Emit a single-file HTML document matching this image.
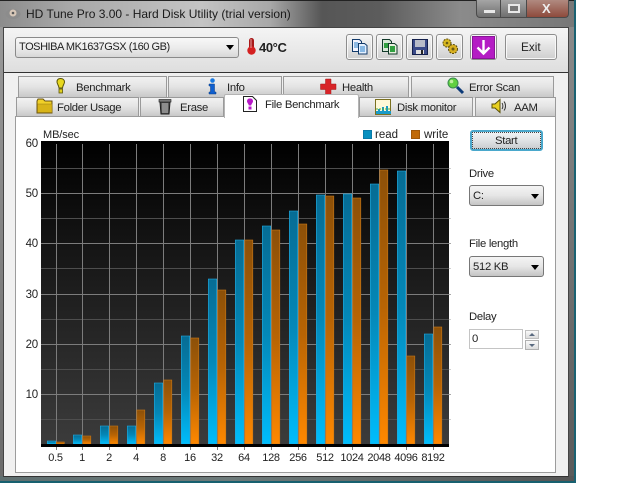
<!DOCTYPE html>
<html><head><meta charset="utf-8">
<style>
html,body{margin:0;padding:0;background:#fff}
#w{position:relative;width:640px;height:483px;overflow:hidden;background:#fff;font-family:"Liberation Sans",sans-serif;font-size:12px;color:#222}
#w div{position:absolute;box-sizing:border-box}
.t{white-space:nowrap}
.l{font-size:11.3px;letter-spacing:-.3px;line-height:15px}
.tab{background:linear-gradient(#f2f2f2,#e4e4e4 45%,#c6c6c6);border:1px solid #9a9a9a;border-bottom:none}
.tb{background:linear-gradient(#f6f6f6,#e2e2e2 50%,#cfcfcf);border:1px solid #8d8d8d;border-radius:3px;box-shadow:inset 0 0 0 1px #f8f8f8}
.sel{background:linear-gradient(#f4f4f4,#e6e6e6 50%,#c4c4c4);border:1px solid #777;border-radius:3px}
.arr{width:0;height:0;border-left:4px solid transparent;border-right:4px solid transparent;border-top:5px solid #000}
svg{position:absolute;overflow:visible}
</style></head><body>
<div id="w">
<!-- frame -->
<div style="left:0;top:0;width:576px;height:483px;background:linear-gradient(90deg,#8c8c8c 0,#a8a8a8 12%,#c4c4c4 35%,#a8a8a8 47%,#565656 56%,#5c5c5c 66%,#8b8b8b 80%,#777 100%);border-top:1px solid #222;border-right:1px solid #1d5f6e"></div>
<div style="left:0;top:27px;width:3px;height:456px;background:linear-gradient(#999,#6a6a6a)"></div>
<div style="left:569px;top:27px;width:6px;height:454px;background:linear-gradient(#8a8a8a,#5a5a5a)"></div>
<div style="left:0;top:476px;width:575px;height:5px;background:linear-gradient(90deg,#5f6f70,#6d7a7a 40%,#555 100%)"></div>
<div style="left:0;top:481px;width:576px;height:2px;background:#17606f"></div>
<div style="left:574px;top:0;width:2px;height:483px;background:#1a6272"></div>
<!-- caption -->
<svg style="left:5px;top:7px" width="16" height="13"><ellipse cx="8" cy="7" rx="7.500" ry="5" fill="#8c8c8c"/><ellipse cx="8" cy="6" rx="3.500" ry="3.500" fill="#d8c8b8"/><circle cx="8" cy="6" r="1.300" fill="#5a5a5a"/></svg>
<div class="t" style="left:26px;top:6px;font-size:12px;line-height:16px;color:#1a1a1a">HD Tune Pro 3.00 - Hard Disk Utility (trial version)</div>
<div style="left:476px;top:0;width:25px;height:18px;background:linear-gradient(#a5a5a5,#6f6f6f);border:1px solid #4a4a4a;border-top:none;border-radius:0 0 0 4px"></div>
<div style="left:484px;top:10px;width:11px;height:3px;background:#e8e8e8"></div>
<div style="left:501px;top:0;width:25px;height:18px;background:linear-gradient(#a5a5a5,#6f6f6f);border-bottom:1px solid #4a4a4a"></div>
<div style="left:508px;top:4px;width:12px;height:9px;border:2px solid #e8e8e8;background:#777"></div>
<div style="left:526px;top:0;width:43px;height:18px;background:linear-gradient(#b08a80,#8e4a3c);border:1px solid #4a4a4a;border-top:none;border-radius:0 0 4px 0"></div>
<div class="t" style="left:542px;top:0;font-size:13px;font-weight:bold;line-height:17px;color:#eee">X</div>
<!-- client -->
<div style="left:3px;top:27px;width:566px;height:450px;background:#f0f0f0;border:1px solid #444;border-bottom:1px solid #333"></div>
<div style="left:4px;top:28px;width:564px;height:44px;background:linear-gradient(#f4f4f4,#dedede)"></div>
<div style="left:4px;top:72px;width:564px;height:1px;background:#333"></div>
<!-- drive select -->
<div class="sel" style="left:15px;top:37px;width:224px;height:21px;border-color:#8a8a8a;background:linear-gradient(#f8f8f8,#ececec 50%,#d8d8d8)"></div>
<div class="t" style="left:19px;top:40px;font-size:11px;letter-spacing:-.45px;line-height:15px">TOSHIBA MK1637GSX (160 GB)</div>
<div class="arr" style="left:226px;top:45px"></div>
<svg style="left:246px;top:37px" width="11" height="19"><rect x="3" y="1" width="5" height="12" rx="2.500" fill="#a81818"/><circle cx="5.500" cy="13.500" r="4.200" fill="#d42020"/><rect x="4.500" y="2" width="1" height="9" fill="#e8a0a0"/></svg>
<div class="t" style="left:259px;top:40px;font-size:13px;font-weight:bold;line-height:15px;letter-spacing:-.4px">40°C</div>
<!-- toolbar buttons -->
<div class="tb" style="left:346px;top:34px;width:27px;height:26px"></div>
<div class="tb" style="left:376px;top:34px;width:27px;height:26px"></div>
<div class="tb" style="left:406px;top:34px;width:27px;height:26px"></div>
<div class="tb" style="left:436px;top:34px;width:27px;height:26px"></div>
<div class="tb" style="left:470px;top:34px;width:27px;height:26px"></div>
<div class="tb" style="left:505px;top:34px;width:52px;height:26px"></div>
<div class="t" style="left:521px;top:39px;font-size:11.800px;line-height:16px">Exit</div>
<svg style="left:352px;top:39px" width="16" height="16"><path d="M.5.5h7l2 2v10H.5z" fill="#f4f4ff" stroke="#123a6a"/><path d="M6.500 4.500h6l2.500 2v8.500H6.500z" fill="#e4f0ff" stroke="#123a6a"/><path d="M8 8h5M8 10h5M8 12h5M2 4h4M2 6h4M2 8h4" stroke="#2a80c8"/></svg>
<svg style="left:382px;top:39px" width="16" height="16"><path d="M.5.5h7l2 2v10H.5z" fill="#d8e8d8" stroke="#123a2a"/><path d="M6.500 4.500h6l2.500 2v8.500H6.500z" fill="#e8f0e0" stroke="#123a2a"/><rect x="8" y="7" width="5" height="6" fill="#30a040"/><rect x="2" y="4" width="4" height="5" fill="#30a040"/></svg>
<svg style="left:412px;top:39px" width="16" height="16"><rect x=".5" y=".5" width="15" height="15" fill="#3a4a88" stroke="#14204c"/><rect x="3" y="1" width="10" height="7" fill="#b8bcc8"/><rect x="4" y="11" width="8" height="4" fill="#e0e0e0"/><rect x="9" y="11" width="2" height="4" fill="#222"/></svg>
<svg style="left:441px;top:38px" width="18" height="17"><circle cx="6" cy="5" r="4" fill="#d8b820" stroke="#5a4a08" stroke-dasharray="2 1"/><circle cx="12" cy="11" r="4.500" fill="#d8b020" stroke="#5a4a08" stroke-dasharray="2 1"/><circle cx="6" cy="5" r="1.300" fill="#6a5a10"/><circle cx="12" cy="11" r="1.500" fill="#6a5a10"/></svg>
<svg style="left:471px;top:35px" width="25" height="25"><rect x="1.500" y="1.500" width="22" height="22" fill="#b41cc4" stroke="#8a1498"/><path d="M12.500 5v13M6.500 12.500l6 6 6-6" fill="none" stroke="#fff" stroke-width="2.400"/></svg>
<!-- rear tabs -->
<div class="tab" style="left:18px;top:76px;width:149px;height:22px"></div>
<div class="tab" style="left:168px;top:76px;width:114px;height:22px"></div>
<div class="tab" style="left:283px;top:76px;width:126px;height:22px"></div>
<div class="tab" style="left:411px;top:76px;width:143px;height:22px"></div>
<div class="t l" style="left:76px;top:81px">Benchmark</div>
<div class="t l" style="left:227px;top:81px">Info</div>
<div class="t l" style="left:342px;top:81px">Health</div>
<div class="t l" style="left:469px;top:81px">Error Scan</div>
<svg style="left:56px;top:78px" width="10" height="17"><path d="M4.500.5c2.500 0 4 1.500 4 3.500 0 2-1.700 3-2 6H3C2.700 7 1 6 1 4 1 2 2 .5 4.500.5z" fill="#e8d820" stroke="#5a5408"/><rect x="3" y="11" width="3.500" height="4" fill="#e0d020" stroke="#5a5408" stroke-width=".8"/></svg>
<svg style="left:208px;top:78px" width="9" height="17"><circle cx="4.500" cy="2.500" r="2.300" fill="#1878e0"/><path d="M1 6h5.500v8H8v2H1v-2h1.500V8H1z" fill="#1060d0" stroke="#083a80" stroke-width=".5"/></svg>
<svg style="left:320px;top:78px" width="17" height="17"><path d="M5.500 1h5.500v5h5v5.500h-5V16.500H5.500V11.500H.5V6h5z" fill="#d82428" stroke="#a01818" stroke-width=".5"/></svg>
<svg style="left:447px;top:77px" width="18" height="18"><circle cx="6" cy="6" r="5" fill="#60d040" stroke="#3a8a50"/><circle cx="4.500" cy="4.500" r="1.800" fill="#c0f0a0"/><path d="M10 10l6 6" stroke="#0c3a78" stroke-width="3"/></svg>
<!-- front tabs -->
<div class="tab" style="left:16px;top:97px;width:123px;height:20px"></div>
<div class="tab" style="left:140px;top:97px;width:84px;height:20px"></div>
<div class="tab" style="left:359px;top:97px;width:114px;height:20px"></div>
<div class="tab" style="left:475px;top:97px;width:81px;height:20px"></div>
<div class="t l" style="left:57px;top:101px">Folder Usage</div>
<div class="t l" style="left:180px;top:101px">Erase</div>
<div class="t l" style="left:397px;top:101px">Disk monitor</div>
<div class="t l" style="left:514px;top:101px">AAM</div>
<svg style="left:36px;top:98px" width="17" height="16"><path d="M1 3l1-2h5l2 2h7v12H1z" fill="#f0d028" stroke="#6a5410"/><rect x="1.500" y="6" width="14.500" height="8.500" fill="#d8b418" stroke="#9a7c10" stroke-width=".5"/></svg>
<svg style="left:158px;top:98px" width="14" height="16"><path d="M2 4h10l-1 12H3z" fill="#585858" stroke="#1a1a1a"/><rect x="1" y="1.500" width="12" height="2.500" fill="#7a7a7a" stroke="#1a1a1a" stroke-width=".6"/><path d="M5 5v10M7 5v10M9 5v10" stroke="#c0c0c0"/></svg>
<svg style="left:375px;top:99px" width="17" height="16"><rect x=".5" y=".5" width="15" height="15" fill="#fff8d8" stroke="#7a7020"/><path d="M1 15V12h2v-2h2v2h2V8h2v4h2V7h2v5h3v3z" fill="#1a9ac8"/><path d="M1 10h14" stroke="#50b040" stroke-dasharray="2 1"/></svg>
<svg style="left:491px;top:98px" width="17" height="16"><path d="M1 6h3l5-4.500v13L4 10H1z" fill="#e8d020" stroke="#5a5008"/><path d="M11 5c1.200 1.500 1.200 4.500 0 6M13 3.500c2 2.500 2 6.500 0 9" fill="none" stroke="#333"/></svg>
<!-- panel -->
<div style="left:15px;top:116px;width:541px;height:357px;background:#fff;border:1px solid #9c9c9c"></div>
<!-- active tab -->
<div style="left:224px;top:94px;width:135px;height:24px;background:#fff;border:1px solid #b4b4b4;border-bottom:none;border-radius:2px 2px 0 0"></div>
<div class="t l" style="left:265px;top:98px">File Benchmark</div>
<svg style="left:243px;top:96px" width="15" height="17"><path d="M.5.500h9l4 4v11H.5z" fill="#fff" stroke="#222"/><path d="M7 2.500c2 0 3 1 3 2.800 0 1.500-1.500 2.500-1.800 4.200H5.800C5.500 7.800 4 6.800 4 5.300 4 3.500 5 2.500 7 2.500z" fill="#b818c8"/><rect x="5.500" y="10.500" width="3" height="3" fill="#b818c8"/></svg>
<!-- chart -->
<svg style="left:0;top:0" width="640" height="483">
<defs>
<linearGradient id="bg" x1="0" y1="0" x2="0" y2="1"><stop offset="0" stop-color="#000"/><stop offset="1" stop-color="#3c3c3c"/></linearGradient>
<linearGradient id="r" x1="0" y1="0" x2="0" y2="1"><stop offset="0" stop-color="#066c94"/><stop offset=".5" stop-color="#0488b8"/><stop offset="1" stop-color="#00bdfc"/></linearGradient>
<linearGradient id="o" x1="0" y1="0" x2="0" y2="1"><stop offset="0" stop-color="#8c5008"/><stop offset=".5" stop-color="#b86404"/><stop offset="1" stop-color="#ff8800"/></linearGradient>
</defs>
<rect x="41" y="141" width="408" height="306" fill="url(#bg)"/>
<g stroke="#7c7c7c" stroke-width="1">
<path d="M41 193.500H449M41 243.500H449M41 294.500H449M41 344.500H449M41 394.500H449"/>
</g>
<g stroke="#a8a8a8" stroke-width="1">
<path d="M449 193.500H451M449 243.500H451M449 294.500H451M449 344.500H451M449 394.500H451"/>
</g>
<g stroke="#4e4e4e" stroke-width="1">
<path d="M41 168.500H449M41 218.500H449M41 268.500H449M41 319.500H449M41 369.500H449M41 419.500H449"/>
</g>
<g stroke="#d0d0d0" stroke-width="1">
<path d="M449 168.500H451M449 218.500H451M449 268.500H451M449 319.500H451M449 369.500H451M449 419.500H451"/>
</g>
<g stroke="#7c7c7c" stroke-width="1">
<path d="M56.500 143V449M82.500 143V449M109.500 143V449M136.500 143V449M163.500 143V449M190.500 143V449M217.500 143V449M244.500 143V449M271.500 143V449M298.500 143V449M325.500 143V449M352.500 143V449M379.500 143V449M406.500 143V449M433.500 143V449"/>
</g>
<rect x="41" y="141" width="408" height="3" fill="#000"/>
<g fill="url(#r)" stroke="#22a8dc" stroke-width=".6">
<rect x="47.300" y="441" width="8.400" height="3"/>
<rect x="73.300" y="435" width="8.400" height="9"/>
<rect x="100.300" y="426" width="8.400" height="18"/>
<rect x="127.300" y="426" width="8.400" height="18"/>
<rect x="154.300" y="383" width="8.400" height="61"/>
<rect x="181.300" y="336" width="8.400" height="108"/>
<rect x="208.300" y="279" width="8.400" height="165"/>
<rect x="235.300" y="240" width="8.400" height="204"/>
<rect x="262.300" y="226" width="8.400" height="218"/>
<rect x="289.300" y="211" width="8.400" height="233"/>
<rect x="316.300" y="195" width="8.400" height="249"/>
<rect x="343.300" y="194" width="8.400" height="250"/>
<rect x="370.300" y="184" width="8.400" height="260"/>
<rect x="397.300" y="171" width="8.400" height="273"/>
<rect x="424.300" y="334" width="8.400" height="110"/>
</g>
<g fill="url(#o)" stroke="#c87818" stroke-width=".6">
<rect x="56.300" y="442" width="8" height="2"/>
<rect x="82.800" y="436" width="8" height="8"/>
<rect x="109.800" y="426" width="8" height="18"/>
<rect x="136.800" y="410" width="8" height="34"/>
<rect x="163.800" y="380" width="8" height="64"/>
<rect x="190.800" y="338" width="8" height="106"/>
<rect x="217.800" y="290" width="8" height="154"/>
<rect x="244.800" y="240" width="8" height="204"/>
<rect x="271.800" y="230" width="8" height="214"/>
<rect x="298.800" y="224" width="8" height="220"/>
<rect x="325.800" y="196" width="8" height="248"/>
<rect x="352.800" y="198" width="8" height="246"/>
<rect x="379.800" y="170" width="8" height="274"/>
<rect x="406.800" y="356" width="8" height="88"/>
<rect x="433.800" y="327" width="8" height="117"/>
</g>
<rect x="41" y="444" width="408" height="3" fill="#000"/>
<g stroke="#7c7c7c"><path d="M56.500 447V450M82.500 447V450M109.500 447V450M136.500 447V450M163.500 447V450M190.500 447V450M217.500 447V450M244.500 447V450M271.500 447V450M298.500 447V450M325.500 447V450M352.500 447V450M379.500 447V450M406.500 447V450M433.500 447V450"/></g>
<g font-family="Liberation Sans, sans-serif" font-size="11.500" letter-spacing="-.2" fill="#222" text-anchor="end">
<text x="38" y="147">60</text><text x="38" y="197">50</text><text x="38" y="247">40</text><text x="38" y="298">30</text><text x="38" y="348">20</text><text x="38" y="398">10</text>
</g>
<g font-family="Liberation Sans, sans-serif" font-size="11" letter-spacing="-.3" fill="#222" text-anchor="middle">
<text x="55.500" y="461">0.5</text><text x="82" y="461">1</text><text x="109" y="461">2</text><text x="136" y="461">4</text><text x="163" y="461">8</text><text x="190" y="461">16</text><text x="217" y="461">32</text><text x="244" y="461">64</text><text x="271" y="461">128</text><text x="298" y="461">256</text><text x="325" y="461">512</text><text x="352" y="461">1024</text><text x="379" y="461">2048</text><text x="406" y="461">4096</text><text x="433" y="461">8192</text>
</g>
<g font-family="Liberation Sans, sans-serif" font-size="11" fill="#222">
<text x="43" y="138" letter-spacing="-.1">MB/sec</text><text x="375" y="138" font-size="11.500">read</text><text x="424" y="138" font-size="11.500">write</text>
</g>
<rect x="363.500" y="130.500" width="8" height="8" fill="#0890c0" stroke="#0a7aa8"/>
<rect x="411.500" y="130.500" width="8" height="8" fill="#c06a08" stroke="#a05808"/>
</svg>
<!-- right controls -->
<div style="left:470px;top:130px;width:73px;height:21px;background:linear-gradient(#f0f4f6,#dfe3e5 50%,#c8cccf);border:2px solid #4aa8cc;border-radius:3px"></div>
<div style="left:472px;top:132px;width:69px;height:17px;border:1px dotted #444"></div>
<div class="t l" style="left:495px;top:134px">Start</div>
<div class="t l" style="left:469px;top:167px">Drive</div>
<div class="sel" style="left:469px;top:185px;width:75px;height:21px"></div>
<div class="t l" style="left:473px;top:189px">C:</div>
<div class="arr" style="left:531px;top:194px"></div>
<div class="t l" style="left:469px;top:237px">File length</div>
<div class="sel" style="left:469px;top:256px;width:75px;height:21px"></div>
<div class="t l" style="left:473px;top:260px">512 KB</div>
<div class="arr" style="left:531px;top:265px"></div>
<div class="t l" style="left:469px;top:310px">Delay</div>
<div style="left:469px;top:329px;width:54px;height:20px;background:#fff;border:1px solid #c4c4c4"></div>
<div class="t l" style="left:472px;top:332px">0</div>
<div style="left:525px;top:330px;width:14px;height:9px;background:linear-gradient(#fafafa,#dcdcdc);border:1px solid #c0c0c0"></div>
<div style="left:525px;top:340px;width:14px;height:10px;background:linear-gradient(#fafafa,#dcdcdc);border:1px solid #b0b0b0"></div>
<div style="left:529px;top:333px;width:0;height:0;border-left:3px solid transparent;border-right:3px solid transparent;border-bottom:3px solid #5a6a80"></div>
<div style="left:529px;top:344px;width:0;height:0;border-left:3px solid transparent;border-right:3px solid transparent;border-top:3px solid #5a6a80"></div>
</div>
</body></html>
